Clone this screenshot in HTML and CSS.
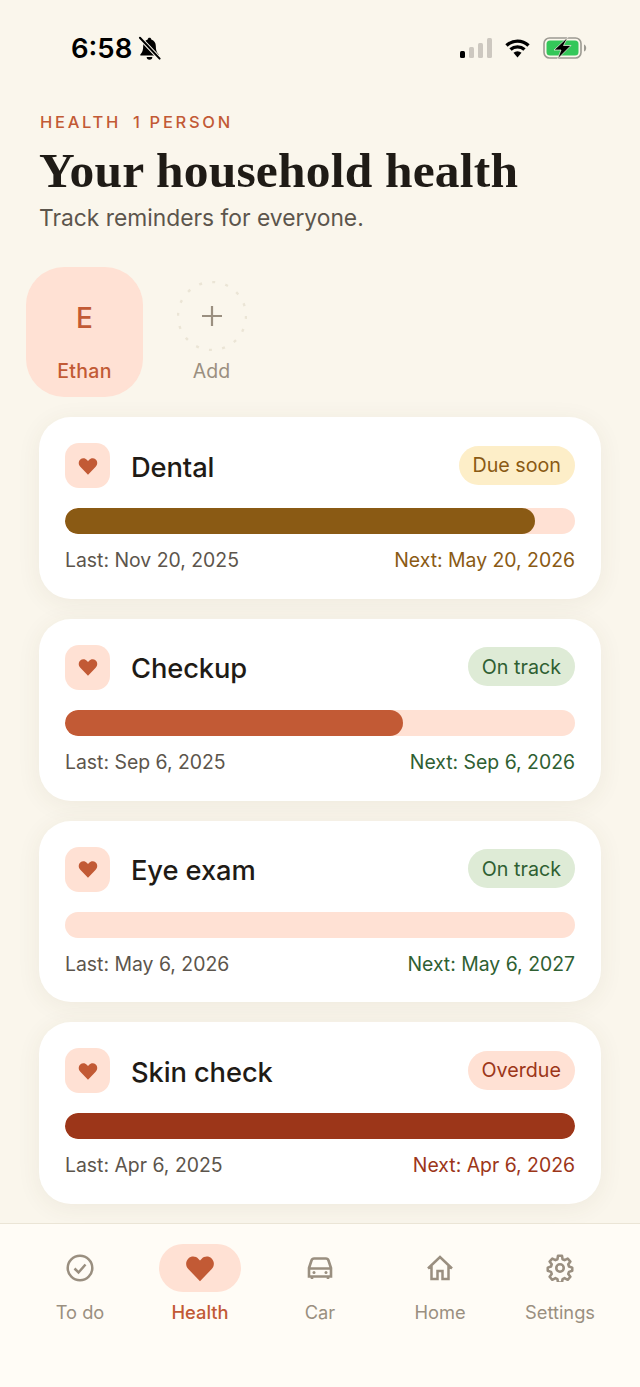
FILE: index.html
```html
<!DOCTYPE html>
<html>
<head>
    <meta charset="utf-8" />
    <title>Household health</title>
    <link rel="stylesheet" href="styles.css">
</head>
<body>
    <div class="page">
        <div class="statusbar">
            <div class="status-left">
                <span class="time">6:58</span>
                <svg class="bell" width="27" height="27" viewBox="0 0 24 24">
                    <path d="M12 2.500c-.9 0-1.500.6-1.600 1.400C7.800 4.700 6.400 6.900 6.400 9.700c0 3.800-.8 5.600-2.400 7.300-.5.600-.2 1.300.6 1.300h14.800c.8 0 1.100-.7.600-1.300-1.600-1.700-2.400-3.500-2.400-7.300 0-2.800-1.400-5-4-5.800C13.500 3.100 12.900 2.500 12 2.500z" fill="#000"/>
                    <path d="M9.500 19.600h5a2.500 2.300 0 0 1-5 0z" fill="#000"/>
                    <path d="M3.500 2.500 L21 21" stroke="#faf6ec" stroke-width="3.600"/>
                    <path d="M3.500 2.500 L21 21" stroke="#000" stroke-width="1.800" stroke-linecap="round"/>
                </svg>
            </div>
            <div class="status-right">
                <svg width="32" height="20" viewBox="0 0 32 20">
                    <rect x="0" y="13" width="5" height="7" rx="1.500" fill="#000"/>
                    <rect x="9" y="9" width="5" height="11" rx="1.500" fill="#cdc8c0"/>
                    <rect x="18" y="5" width="5" height="15" rx="1.500" fill="#cdc8c0"/>
                    <rect x="27" y="0" width="5" height="20" rx="1.500" fill="#cdc8c0"/>
                </svg>
                <svg class="wifi" width="27" height="20" viewBox="0 0 26 20">
                    <path d="M2 7.500a16 16 0 0 1 22 0M6 11.500a10.500 10.500 0 0 1 14 0" fill="none" stroke="#000" stroke-width="3.400"/>
                    <path d="M9 14.700a6 6 0 0 1 8 0L13 19.500z" fill="#000"/>
                </svg>
                <svg width="44" height="22" viewBox="0 0 44 22">
                    <rect x="1" y="1" width="37" height="20" rx="5.500" fill="none" stroke="#9c9a92" stroke-width="1.600"/>
                    <rect x="3.500" y="3.500" width="32" height="15" rx="3.500" fill="#34c759"/>
                    <path d="M41 7.500c1.500.5 2.200 2 2.200 3.500s-.7 3-2.200 3.500z" fill="#9c9a92"/>
                    <path d="M25 0 11 13h7l-3.500 9L28 8.500h-7.500z" fill="#000" stroke="#faf6ec" stroke-width="0.700"/>
                </svg>
            </div>
        </div>

        <div class="header">
            <div class="eyebrow"><span>HEALTH</span><span>1 PERSON</span></div>
            <h1>Your household health</h1>
            <p class="subtitle">Track reminders for everyone.</p>
        </div>

        <div class="people">
            <div class="person person-active">
                <div class="person-initial">E</div>
                <div class="person-name">Ethan</div>
            </div>
            <div class="person">
                <svg class="add-circle" width="70" height="70" viewBox="0 0 70 70">
                    <circle cx="35" cy="35" r="34" fill="none" stroke="#ebe5d6" stroke-width="2.400" stroke-dasharray="3 10.350"/>
                    <path d="M35 25v20M25 35h20" stroke="#9a8f80" stroke-width="2.200" fill="none"/>
                </svg>
                <div class="person-name add-name">Add</div>
            </div>
        </div>

        <div class="cards">
            <div class="card">
                <div class="card-top">
                    <div class="card-icon"><svg width="20" height="20" viewBox="0 0 24 24"><use href="#heart"/></svg></div>
                    <div class="card-title">Dental</div>
                    <div class="badge badge-soon">Due soon</div>
                </div>
                <div class="bar"><div class="fill fill-soon" style="width: 92.200%"></div></div>
                <div class="dates"><span>Last: Nov 20, 2025</span><span class="next-soon">Next: May 20, 2026</span></div>
            </div>
            <div class="card">
                <div class="card-top">
                    <div class="card-icon"><svg width="20" height="20" viewBox="0 0 24 24"><use href="#heart"/></svg></div>
                    <div class="card-title">Checkup</div>
                    <div class="badge badge-ok">On track</div>
                </div>
                <div class="bar"><div class="fill fill-ok" style="width: 66.300%"></div></div>
                <div class="dates"><span>Last: Sep 6, 2025</span><span class="next-ok">Next: Sep 6, 2026</span></div>
            </div>
            <div class="card">
                <div class="card-top">
                    <div class="card-icon"><svg width="20" height="20" viewBox="0 0 24 24"><use href="#heart"/></svg></div>
                    <div class="card-title">Eye exam</div>
                    <div class="badge badge-ok">On track</div>
                </div>
                <div class="bar"></div>
                <div class="dates"><span>Last: May 6, 2026</span><span class="next-ok">Next: May 6, 2027</span></div>
            </div>
            <div class="card">
                <div class="card-top">
                    <div class="card-icon"><svg width="20" height="20" viewBox="0 0 24 24"><use href="#heart"/></svg></div>
                    <div class="card-title">Skin check</div>
                    <div class="badge badge-late">Overdue</div>
                </div>
                <div class="bar"><div class="fill fill-late" style="width: 100%"></div></div>
                <div class="dates"><span>Last: Apr 6, 2025</span><span class="next-late">Next: Apr 6, 2026</span></div>
            </div>
        </div>

        <div class="nav">
            <div class="nav-item">
                <div class="nav-icon">
                    <svg width="28" height="28" viewBox="0 0 28 28" fill="none" stroke="#9a8f80" stroke-width="2.500">
                        <circle cx="14" cy="14" r="12.300"/>
                        <path d="M8.500 14.500l4 4 7-8"/>
                    </svg>
                </div>
                <div class="nav-label">To do</div>
            </div>
            <div class="nav-item nav-active">
                <div class="nav-icon">
                    <svg width="30" height="30" viewBox="0 0 24 24"><use href="#heart"/></svg>
                </div>
                <div class="nav-label">Health</div>
            </div>
            <div class="nav-item">
                <div class="nav-icon">
                    <svg width="26" height="26" viewBox="0 0 26 26" fill="none" stroke="#9a8f80" stroke-width="2.600">
                        <path d="M2 13.500h22M5 21.500v2.500M21 21.500v2.500M2 13v8.500h22V13l-2.500-7.500c-.4-1.200-1.300-2-2.600-2H7.100c-1.300 0-2.200.8-2.600 2z"/>
                        <circle cx="7" cy="17.500" r="1.500" fill="#9a8f80" stroke="none"/>
                        <circle cx="19" cy="17.500" r="1.500" fill="#9a8f80" stroke="none"/>
                    </svg>
                </div>
                <div class="nav-label">Car</div>
            </div>
            <div class="nav-item">
                <div class="nav-icon">
                    <svg width="28" height="28" viewBox="0 0 28 28" fill="none" stroke="#9a8f80" stroke-width="2.500">
                        <path d="M2 14.500 14 3l12 11.500M5.500 12v13h6v-8h5v8h6V12"/>
                    </svg>
                </div>
                <div class="nav-label">Home</div>
            </div>
            <div class="nav-item">
                <div class="nav-icon">
                    <svg width="28" height="28" viewBox="0 0 24 24" fill="none" stroke="#9a8f80" stroke-width="2.200" stroke-linejoin="round">
                        <circle cx="12" cy="12" r="3.200"/>
                        <path d="M10.300 1.500h3.400l.5 3 1.700.8 2.700-1.400 2.300 2.600-1.800 2.400.6 1.800 2.800 1v2.600l-2.800 1-.6 1.800 1.800 2.400-2.300 2.600-2.700-1.400-1.700.8-.5 3h-3.400l-.5-3-1.700-.8-2.700 1.400-2.300-2.600 1.800-2.400-.6-1.800-2.800-1v-2.600l2.800-1 .6-1.800-1.800-2.400 2.300-2.600 2.700 1.400 1.700-.8z"/>
                    </svg>
                </div>
                <div class="nav-label">Settings</div>
            </div>
        </div>
    </div>

    <svg width="0" height="0" class="defs">
        <symbol id="heart" viewBox="0 0 24 24">
            <path d="M12 22.500 2.800 13C.2 10.300.4 6.500 2.700 4.300 5 2.200 8.600 2.300 10.800 4.700L12 6l1.200-1.300c2.200-2.400 5.800-2.500 8.100-.4 2.300 2.200 2.500 6 -.1 8.700z" fill="#c25a35"/>
        </symbol>
    </svg>
</body>
</html>
```

FILE: styles.css
```css
* {
    box-sizing: border-box;
    font-family: 'Inter', sans-serif;
}

html, body {
    margin: 0;
    padding: 0;
    background-color: #faf6ec;
}

.defs {
    display: block;
    height: 0;
}

.page {
    width: 640px;
    height: 1387px;
    display: flex;
    flex-direction: column;
    overflow: hidden;
}

/* status bar */
.statusbar {
    height: 96px;
    flex-shrink: 0;
    display: flex;
    justify-content: space-between;
    align-items: flex-start;
    padding: 32px 53px 0 71px;
}

.status-left, .status-right {
    display: flex;
    align-items: center;
}

.status-left {
    gap: 4px;
}

.status-right {
    gap: 12px;
    padding-top: 5px;
}

.time {
    font-size: 27.500px;
    line-height: 32px;
    font-weight: 600;
    color: #000;
}

/* header */
.header {
    padding: 0 39px;
}

.eyebrow {
    display: flex;
    gap: 12px;
    padding-left: 1px;
    font-size: 16.500px;
    line-height: 20px;
    font-weight: 500;
    letter-spacing: 2.700px;
    color: #c25a35;
    margin-top: 16px;
}

h1 {
    margin: 7px 0 0;
    font-family: 'Liberation Serif', serif;
    font-size: 49.500px;
    line-height: 63px;
    font-weight: 700;
    color: #1f1b16;
    letter-spacing: 0.200px;
    white-space: nowrap;
}

.subtitle {
    margin: 0;
    font-size: 22.800px;
    line-height: 32px;
    color: #5c554c;
}

/* people row */
.people {
    display: flex;
    gap: 10px;
    padding: 0 26px;
    margin-top: 33px;
}

.person {
    width: 117px;
    height: 130px;
    border-radius: 38px;
    display: flex;
    flex-direction: column;
    align-items: center;
    padding-top: 14px;
}

.person-active {
    background-color: #ffe1d4;
}

.person-initial {
    height: 70px;
    padding-top: 4px;
    display: flex;
    align-items: center;
    font-size: 28px;
    font-weight: 500;
    color: #c25a35;
}

.person-name {
    margin-top: 8px;
    font-size: 19.500px;
    line-height: 24px;
    font-weight: 500;
    letter-spacing: 0.300px;
    color: #c25a35;
}

.add-name {
    font-weight: 400;
    letter-spacing: 0;
    color: #9a8f80;
}

/* cards */
.cards {
    flex: 1;
    display: flex;
    flex-direction: column;
    gap: 20px;
    padding: 20px 39px 0;
}

.card {
    height: 181.750px;
    flex-shrink: 0;
    background-color: #fff;
    border-radius: 32px;
    padding: 26px;
    box-shadow: 0 4px 24px rgba(90, 70, 40, 0.07);
}

.card-top {
    display: flex;
    align-items: center;
    height: 45px;
}

.card-icon {
    width: 45px;
    height: 45px;
    border-radius: 14px;
    background-color: #ffe1d4;
    display: flex;
    align-items: center;
    justify-content: center;
    margin-right: 21px;
}

.card-title {
    flex: 1;
    font-size: 27.300px;
    font-weight: 550;
    color: #1f1b16;
    letter-spacing: -0.100px;
    padding-top: 3px;
}

.badge {
    height: 39px;
    padding: 0 14px;
    margin-top: -1px;
    border-radius: 20px;
    font-size: 19.700px;
    font-weight: 400;
    display: flex;
    align-items: center;
}

.badge-soon {
    background-color: #fdeec8;
    color: #8a5a14;
}

.badge-ok {
    background-color: #deebd6;
    color: #2f5f32;
}

.badge-late {
    background-color: #ffe1d4;
    color: #9c3619;
}

.bar {
    height: 26px;
    margin-top: 20px;
    border-radius: 13px;
    background-color: #ffe1d4;
    overflow: hidden;
}

.fill {
    height: 100%;
    border-radius: 13px;
}

.fill-soon {
    background-color: #8a5a14;
}

.fill-ok {
    background-color: #c25a35;
}

.fill-late {
    background-color: #9c3619;
}

.dates {
    display: flex;
    justify-content: space-between;
    margin-top: 12px;
    font-size: 19.400px;
    line-height: 28px;
    color: #5c554c;
}

.next-soon {
    color: #8a5a14;
}

.next-ok {
    color: #2f5f32;
}

.next-late {
    color: #9c3619;
}

/* bottom nav */
.nav {
    height: 164px;
    flex-shrink: 0;
    display: flex;
    padding: 20px 20px 0;
    background-color: #fffcf6;
    border-top: 1px solid #ebe5d6;
}

.nav-item {
    flex: 1;
    display: flex;
    flex-direction: column;
    align-items: center;
}

.nav-icon {
    width: 82px;
    height: 48px;
    border-radius: 24px;
    display: flex;
    align-items: center;
    justify-content: center;
}

.nav-active .nav-icon {
    background-color: #ffe1d4;
}

.nav-label {
    margin-top: 8px;
    font-size: 18.300px;
    line-height: 24px;
    color: #9a8f80;
}

.nav-active .nav-label {
    font-weight: 500;
    color: #c25a35;
}
```
